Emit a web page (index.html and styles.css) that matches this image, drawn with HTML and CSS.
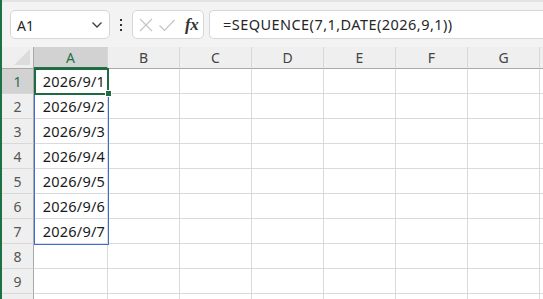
FILE: index.html
```html
<!DOCTYPE html>
<html lang="ja">
<head>
<meta charset="UTF-8">
<title>SEQUENCE</title>
<link rel="stylesheet" href="styles.css">
</head>
<body>
<div class="app">
    <div class="toolbar">
        <div class="namebox">
            <span>A1</span>
            <svg class="chev" width="12" height="8" viewBox="0 0 12 8"><path d="M1.5 1.5 L6 6 L10.5 1.5" fill="none" stroke="#404040" stroke-width="1.4"/></svg>
        </div>
        <div class="dots"><i></i><i></i><i></i></div>
        <div class="fxbox">
            <svg width="16" height="16" viewBox="0 0 16 16"><path d="M2 2 L14 14 M14 2 L2 14" stroke="#c4c4c4" stroke-width="1.2"/></svg>
            <svg width="18" height="16" viewBox="0 0 18 16"><path d="M1.5 8.5 L6.5 13.5 L16.5 3" fill="none" stroke="#c4c4c4" stroke-width="1.2"/></svg>
            <span class="fx">fx</span>
        </div>
        <div class="formula">=SEQUENCE(7,1,DATE(2026,9,1))</div>
    </div>

    <div class="sheet">
        <div class="corner"><span class="tri"></span></div>
        <div class="colhead sel">A</div>
        <div class="colhead">B</div>
        <div class="colhead">C</div>
        <div class="colhead">D</div>
        <div class="colhead">E</div>
        <div class="colhead">F</div>
        <div class="colhead">G</div>
        <div class="colhead"></div>
    </div>
    <div class="sheet" id="grid"></div>
</div>

<script>
const grid = document.getElementById('grid');
for (let r = 1; r <= 10; r++) {
    // row 10 lies below the window edge, so its number is not shown
    let html = `<div class="rowhead${r === 1 ? ' sel' : ''}">${r < 10 ? r : ''}</div>`;
    html += `<div class="cell num">${r <= 7 ? '2026/9/' + r : ''}</div>`;
    for (let c = 0; c < 7; c++) html += '<div class="cell"></div>';
    grid.insertAdjacentHTML('beforeend', html);
}
grid.insertAdjacentHTML('beforeend', '<div class="spill"></div><div class="active"></div><div class="handle"></div>');
</script>
</body>
</html>
```

FILE: styles.css
```css
body {
    margin: 0;
    overflow: hidden;
    font-family: "Noto Sans", "Noto Sans CJK JP", sans-serif;
}
.app {
    width: 543px;
    height: 299px;
    border-left: 2px solid #1e7145;
    box-sizing: border-box;
    background: #fff;
    overflow: hidden;
}
.toolbar {
    display: flex;
    align-items: center;
    height: 47px;
    padding: 0 0 0 8px;
    box-sizing: border-box;
    background: #f3f3f3;
    border-top: 2px solid #e4e4e4;
}
.namebox {
    width: 100px;
    height: 29px;
    box-sizing: border-box;
    background: #fff;
    border: 1px solid #d6d6d6;
    border-radius: 5px;
    display: flex;
    align-items: center;
    justify-content: space-between;
    padding: 0 6px 0 6px;
    font-size: 14px;
    color: #262626;
    flex: none;
}
.namebox span {
    padding-top: 1px;
}
.dots {
    width: 22px;
    display: flex;
    flex-direction: column;
    align-items: center;
    gap: 3px;
    flex: none;
}
.dots i {
    width: 2px;
    height: 2px;
    background: #333;
}
.fxbox {
    width: 72px;
    height: 29px;
    box-sizing: border-box;
    background: #fff;
    border: 1px solid #d6d6d6;
    border-radius: 5px;
    display: flex;
    align-items: center;
    gap: 4px;
    padding: 0 0 0 5px;
    flex: none;
}
.fx {
    font-family: "Liberation Serif", serif;
    font-style: italic;
    font-weight: bold;
    font-size: 17px;
    color: #333;
    margin-left: 5px;
    letter-spacing: -0.5px;
}
.formula {
    margin-left: 5px;
    flex: 1;
    height: 29px;
    box-sizing: border-box;
    background: #fff;
    border: 1px solid #d6d6d6;
    border-right: none;
    border-radius: 5px 0 0 5px;
    padding: 3px 0 0 13px;
    font-size: 14.5px;
    letter-spacing: 0.45px;
    color: #262626;
    white-space: nowrap;
}
.sheet {
    display: grid;
    grid-template-columns: 32px 74px repeat(6, 72px) 40px;
    position: relative;
}
.corner, .colhead {
    height: 22px;
    box-sizing: border-box;
    background: #efefef;
    border-bottom: 1px solid #a9a9a9;
}
.corner {
    border-right: 1px solid #a9a9a9;
    position: relative;
}
.tri {
    position: absolute;
    right: 3px;
    bottom: 3px;
    width: 0;
    height: 0;
    border-left: 16px solid transparent;
    border-bottom: 16px solid #dcdcdc;
}
.colhead {
    font-size: 14px;
    color: #444;
    text-align: center;
    line-height: 22px;
    border-right: 1px solid #d8d8d8;
}
.colhead.sel {
    background: #d2d2d2;
    color: #1e7145;
    border-bottom: 2px solid #1e7145;
}
.rowhead {
    height: 25px;
    box-sizing: border-box;
    background: #efefef;
    border-right: 1px solid #a9a9a9;
    border-bottom: 1px solid #d8d8d8;
    font-size: 14px;
    color: #555;
    text-align: center;
    line-height: 25px;
}
.rowhead.sel {
    background: #d2d2d2;
    color: #1e7145;
}
.cell {
    height: 25px;
    box-sizing: border-box;
    border-right: 1px solid #dadada;
    border-bottom: 1px solid #dadada;
    font-size: 14.5px;
    letter-spacing: 0.2px;
    color: #1a1a1a;
    line-height: 24px;
}
.num {
    text-align: right;
    padding-right: 2px;
}
.spill {
    position: absolute;
    left: 32px;
    top: 0;
    width: 75px;
    height: 176px;
    box-sizing: border-box;
    border: 1px solid #3c6fd0;
}
.active {
    position: absolute;
    left: 32px;
    top: -1px;
    width: 75px;
    height: 27px;
    box-sizing: border-box;
    border: 2px solid #1e6b41;
}
.handle {
    position: absolute;
    left: 103px;
    top: 21px;
    width: 7px;
    height: 7px;
    box-sizing: border-box;
    background: #1e6b41;
    border: 1px solid #fff;
}
```
